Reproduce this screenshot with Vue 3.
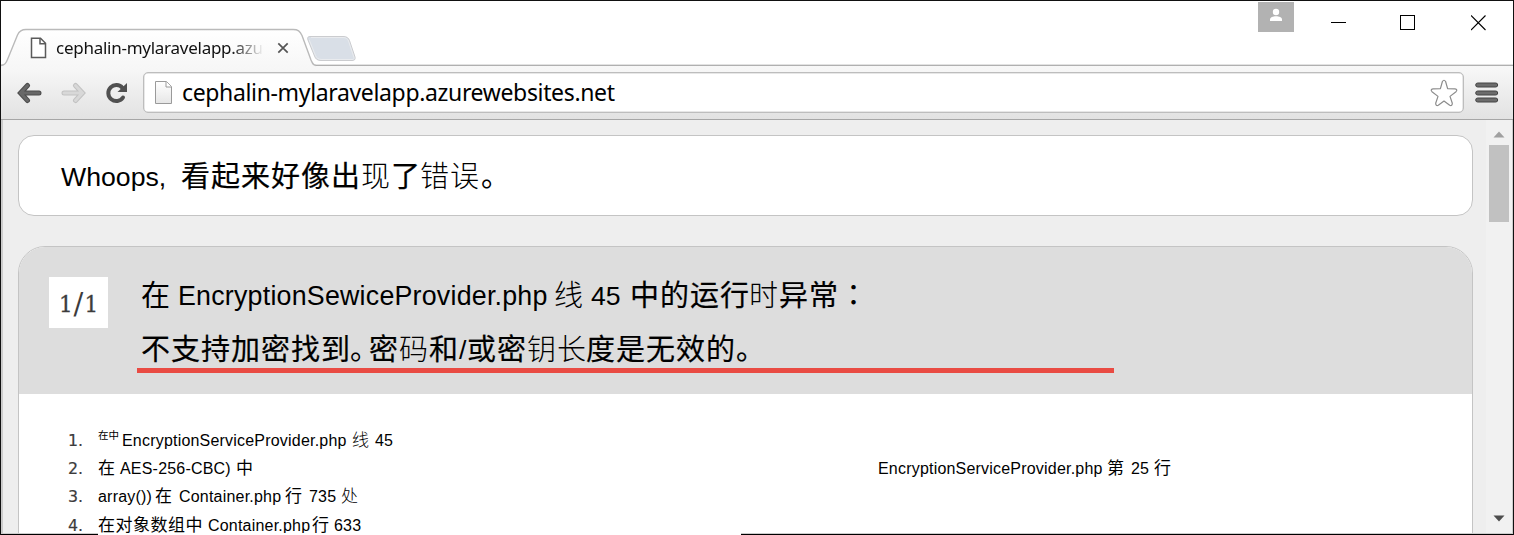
<script setup>
// Every run carries its text, its advance width in px and a style name.
const notice = [
  { t: 'Whoops,', w: 120, k: 'latin' },
  { t: '看起来好像出', w: 180, k: 'heavy' },
  { t: '现', w: 30, k: 'thin' },
  { t: '了', w: 29, k: 'heavy' },
  { t: '错误', w: 60, k: 'thin' },
  { t: '。', w: 31, k: 'heavy stop' },
]
const headline = [
  { t: '在', w: 37, k: 'heavy light' },
  { t: 'EncryptionSewiceProvider.php', w: 376, k: 'latin wide' },
  { t: '线', w: 37, k: 'thin' },
  { t: '45', w: 39, k: 'latin' },
  { t: '中的运行', w: 119, k: 'heavy' },
  { t: '时', w: 30, k: 'thin' },
  { t: '异常', w: 60, k: 'heavy' },
  { t: '：', w: 31, k: 'heavy tc light' },
]
const detail = [
  { t: '不支持加密找到', w: 211, k: 'heavy' },
  { t: '。', w: 17, k: 'heavy narrow light' },
  { t: '密', w: 30, k: 'heavy' },
  { t: '码', w: 30, k: 'thin' },
  { t: '和', w: 30, k: 'heavy' },
  { t: '/', w: 8, k: 'latin' },
  { t: '或密', w: 60, k: 'heavy' },
  { t: '钥长', w: 59, k: 'thin' },
  { t: '度是无效的。', w: 181, k: 'heavy' },
]
const frames = [
  [
    { t: '在中', w: 24, k: 'tiny' },
    { t: 'EncryptionServiceProvider.php', w: 230, k: 'sl' },
    { t: '线', w: 23, k: 'sc faint' },
    { t: '45', w: 20, k: 'sl' },
  ],
  [
    { t: '在', w: 22, k: 'sc' },
    { t: 'AES-256-CBC)', w: 116, k: 'sl' },
    { t: '中', w: 642, k: 'sc' },
    { t: 'EncryptionServiceProvider.php', w: 229, k: 'sl' },
    { t: '第', w: 24, k: 'sc' },
    { t: '25', w: 23, k: 'sl' },
    { t: '行', w: 20, k: 'sc' },
  ],
  [
    { t: 'array())', w: 57, k: 'sl' },
    { t: '在', w: 24, k: 'sc' },
    { t: 'Container.php', w: 106, k: 'sl' },
    { t: '行', w: 24, k: 'sc' },
    { t: '735', w: 32, k: 'sl' },
    { t: '处', w: 20, k: 'sc faint' },
  ],
  [
    { t: '在对象数组中', w: 110, k: 'sc' },
    { t: 'Container.php', w: 104, k: 'sl' },
    { t: '行', w: 22, k: 'sc' },
    { t: '633', w: 32, k: 'sl' },
  ],
]
</script>

<template>
  <div class="window">
    <header class="titlebar">
      <svg class="tabshape" width="364" height="39" viewBox="0 0 364 39">
        <defs>
          <linearGradient id="tabfill" x1="0" y1="0" x2="0" y2="1">
            <stop offset="0" stop-color="#fff" />
            <stop offset="1" stop-color="#f7f7f7" />
          </linearGradient>
        </defs>
        <path d="M0 37.5C4 37 5 35 6.500 31.500L16.500 7C18.500 2.500 21 1.500 25 1.500H292C297 1.500 299 3 301 7.500L310 32C311.500 35.500 312 37 315 37.500V39H0Z" fill="url(#tabfill)" />
        <path d="M0 37.500C4 37 5 35 6.500 31.500L16.500 7C18.500 2.500 21 1.500 25 1.500H292C297 1.500 299 3 301 7.500L310 32C311.500 35.500 312 37 315 37.500" fill="none" stroke="#bababa" stroke-width="1.4" />
        <path d="M309 8.500H342C346 8.500 347.500 10 348.500 12.500L354 29C354.500 31.500 353.500 32.500 351 32.500H320C316.500 32.500 314.500 31 313.500 28L307 12C306 9.500 307 8.500 309 8.500Z" fill="#d9dfe7" stroke="#cbcccf" />
        <path d="M310 9.500H342C345.500 9.500 346.500 11 347.500 13L353 29.500C353.300 31 352.500 31.500 351 31.500H321C317.500 31.500 315.500 30 314.500 27.500L308.300 12" fill="none" stroke="#e9ebee" />
      </svg>
      <div class="tab">
        <svg width="17" height="22" viewBox="0 0 17 22">
          <path d="M1.500 1.200H10.500L15.500 6.200V20.500H1.500Z" fill="#fff" stroke="#5a5a5a" stroke-width="1.500" />
          <path d="M10 1V6.700H15.500" fill="none" stroke="#5a5a5a" stroke-width="1.500" />
        </svg>
        <span class="tabtitle">cephalin-mylaravelapp.azu</span>
        <svg class="tabclose" width="12" height="12" viewBox="0 0 12 12">
          <path d="M1.300 1.300L10.700 10.700M10.700 1.300L1.300 10.700" stroke="#555" stroke-width="1.700" />
        </svg>
      </div>
      <div class="controls">
        <svg width="36" height="30" viewBox="0 0 36 30">
          <rect width="36" height="30" fill="#b2b2b2" />
          <circle cx="18" cy="10" r="3.200" fill="#fff" />
          <path d="M12 19V17.500C12 15.500 15 14.300 18 14.300S24 15.500 24 17.500V19Z" fill="#fff" />
        </svg>
        <svg width="16" height="30" viewBox="0 0 16 30"><path d="M0 20.500H15" stroke="#000" /></svg>
        <svg width="16" height="30" viewBox="0 0 16 30"><rect x="0.500" y="13.500" width="14" height="14" fill="none" stroke="#000" /></svg>
        <svg width="16" height="30" viewBox="0 0 16 30"><path d="M0 13.500L14.500 28M14.500 13.500L0 28" stroke="#000" stroke-width="1.100" /></svg>
      </div>
    </header>

    <nav class="toolbar">
      <svg width="25" height="22" viewBox="0 0 25 22">
        <path d="M10.500 3.500L3.500 11L10.500 18.500M4 11H22" fill="none" stroke="#4c4c4c" stroke-width="5" stroke-linecap="round" />
        <path d="M10.500 3.500L3.500 11L10.500 18.500M4 11H22" fill="none" stroke="#686868" stroke-width="3" stroke-linecap="round" />
      </svg>
      <svg class="fwd" width="25" height="22" viewBox="0 0 25 22">
        <path d="M14.500 3.500L21.500 11L14.500 18.500M21 11H3" fill="none" stroke="#c2c2c2" stroke-width="5" stroke-linecap="round" />
        <path d="M14.500 3.500L21.500 11L14.500 18.500M21 11H3" fill="none" stroke="#d8d8d8" stroke-width="3" stroke-linecap="round" />
      </svg>
      <svg class="reload" width="23" height="22" viewBox="0 0 23 22">
        <path d="M18 15.500A8 8 0 1 1 17.500 6" fill="none" stroke="#505050" stroke-width="4" stroke-linecap="round" />
        <path d="M22 1V10H12.500Z" fill="#505050" />
      </svg>
      <div class="address">
        <svg width="19" height="25" viewBox="0 0 19 25">
          <defs>
            <linearGradient id="pagefill" x1="0" y1="0" x2="0" y2="1">
              <stop offset="0" stop-color="#fff" />
              <stop offset="1" stop-color="#e6e6e6" />
            </linearGradient>
          </defs>
          <path d="M2.500 1.500H13.500L18.500 6.500V23.500H2.500Z" fill="url(#pagefill)" stroke="#9a9a9a" />
          <path d="M13 1.500V7H18.500" fill="#fff" stroke="#9a9a9a" />
        </svg>
        <span class="url">cephalin-mylaravelapp.azurewebsites.net</span>
        <svg class="star" width="28" height="28" viewBox="0 0 28 28">
          <path d="M12.400 2.500Q14 0 15.600 2.500L17.600 9.600L25 9.900Q28 10.700 26 12.700L20 17.400L22.300 24.300Q22.300 27.300 19.700 26.300L14 22L8.300 26.300Q5.700 27.300 5.700 24.300L8 17.400L2 12.700Q0 10.700 3 9.900L10.400 9.600Z" fill="#fff" stroke="#8c8c8c" stroke-width="1.200" stroke-linejoin="round" />
        </svg>
      </div>
      <svg class="menu" width="24" height="22" viewBox="0 0 24 22">
        <g fill="#6c6c6c" stroke="#444">
          <rect x="0.700" y="1" width="22" height="4" rx="2" />
          <rect x="0.700" y="9" width="22" height="4" rx="2" />
          <rect x="0.700" y="16" width="22" height="4" rx="2" />
        </g>
      </svg>
    </nav>

    <main class="viewport">
      <div class="page">
        <section class="notice">
          <div class="line">
            <span v-for="(r, i) in notice" :key="i" :class="r.k" :style="{ width: r.w + 'px' }">{{ r.t }}</span>
          </div>
        </section>
        <section class="trace">
          <div class="head">
            <div class="count"><span>1</span><span class="slash">/</span><span>1</span></div>
            <div class="message">
              <div class="line">
                <span v-for="(r, i) in headline" :key="i" :class="r.k" :style="{ width: r.w + 'px' }">{{ r.t }}</span>
              </div>
              <div class="line second">
                <span v-for="(r, i) in detail" :key="i" :class="r.k" :style="{ width: r.w + 'px' }">{{ r.t }}</span>
              </div>
              <div class="underline"></div>
            </div>
          </div>
          <div class="frames">
            <div v-for="(f, n) in frames" :key="n" class="frame">
              <span class="num">{{ n + 1 }}.</span>
              <span v-for="(r, i) in f" :key="i" :class="r.k" :style="{ width: r.w + 'px' }">{{ r.t }}</span>
            </div>
          </div>
        </section>
      </div>
      <div class="scrollbar">
        <svg width="12" height="7" viewBox="0 0 12 7"><path d="M0.500 6.500L6 0.500L11.500 6.500Z" fill="#a0a0a0" /></svg>
        <div class="thumb"></div>
        <svg class="down" width="12" height="7" viewBox="0 0 12 7"><path d="M0.500 0.500L6 6.500L11.500 0.500Z" fill="#4d4d4d" /></svg>
      </div>
    </main>
    <footer class="edge"><i class="gap"></i></footer>
  </div>
</template>

<style>
body { margin: 0; overflow: hidden; }
</style>

<style scoped>
* { box-sizing: border-box; }
svg { display: block; flex: none; }
.window {
  width: 1514px;
  height: 535px;
  display: flex;
  flex-direction: column;
  border: 1px solid #111;
  border-bottom: 0;
  background: #fff;
  overflow: hidden;
}
.edge { position: relative; flex: none; height: 1px; background: #000; }
.gap { position: absolute; left: 97px; bottom: 0; width: 643px; height: 2px; background: #fff; }
.titlebar {
  position: relative;
  height: 65px;
  flex: none;
  display: flex;
  justify-content: space-between;
  border-bottom: 1px solid #b0b0b0;
  box-shadow: inset 0 -1px 0 #e2e2e2;
}
.tabshape { position: absolute; left: 0; bottom: -2px; }
.tab {
  position: relative;
  display: flex;
  align-items: center;
  width: 300px;
  height: 34px;
  margin-top: 30px;
  padding-left: 29px;
}
.tabtitle {
  width: 210px;
  margin-left: 9px;
  white-space: nowrap;
  font: 17px/26px "Noto Sans", sans-serif;
  letter-spacing: -0.260px;
  color: #111;
  -webkit-mask-image: linear-gradient(to right, #000 175px, transparent 208px);
  mask-image: linear-gradient(to right, #000 175px, transparent 208px);
}
.tabclose { margin-left: 11px; }
.controls { display: flex; padding: 1px 26px 0 0; }
.controls svg + svg { margin-left: 37px; }
.controls svg + svg + svg { margin-left: 53px; }
.controls svg + svg + svg + svg { margin-left: 55px; }
.toolbar {
  height: 54px;
  flex: none;
  display: flex;
  align-items: center;
  padding-left: 16px;
  background: linear-gradient(#f8f8f8, #e2e2e2);
  border-bottom: 1px solid #a6a6a6;
}
.fwd { margin-left: 19px; }
.reload { margin-left: 19px; }
.address {
  width: 1321px;
  height: 41px;
  margin-left: 15px;
  padding: 0 5px 0 9px;
  display: flex;
  align-items: center;
  background: #fff;
  border: 1px solid #bdbdbd;
  box-shadow: inset 0 0 0 0.500px #d0d0d0;
  border-radius: 5px;
}
.url { margin-left: 10px; font: 23px/36px "Noto Sans", sans-serif; letter-spacing: -0.350px; color: #000; white-space: nowrap; position: relative; top: -1px; }
.star { margin-left: auto; }
.menu { margin-left: 11px; }
.viewport {
  flex: 1;
  min-height: 0;
  display: flex;
  background: #eee;
  border: solid #ccc;
  border-width: 0 1px 1px 2px;
}
.page { width: 1483px; padding: 15px 0 0 15px; overflow: hidden; }
.notice {
  width: 1455px;
  height: 81px;
  padding: 18px 0 0 42px;
  background: #fff;
  border: 1px solid #c4c4c4;
  border-radius: 16px;
}
.line { display: flex; align-items: baseline; height: 40px; line-height: 40px; white-space: nowrap; color: #000; }
.line span { flex: none; }
.line .latin { font-family: "Liberation Sans", Arial, sans-serif; font-size: 26.670px; position: relative; top: -1px; }
.line .wide { font-size: 26.800px; letter-spacing: 0.220px; }
.heavy { font-family: "Noto Sans CJK SC", sans-serif; font-size: 29px; letter-spacing: 1px; font-weight: 400; -webkit-text-stroke: 0.200px #000; }
.light { -webkit-text-stroke: 0; }
.thin { font-family: "Noto Sans CJK SC", sans-serif; font-size: 29px; letter-spacing: 1px; font-weight: 300; }
.tc { font-family: "Noto Sans CJK TC", sans-serif; }
.stop { text-indent: 1px; -webkit-text-stroke: 0; }
.narrow { text-indent: -2px; letter-spacing: -10px; }
.trace {
  width: 1455px;
  height: 320px;
  margin-top: 30px;
  background: #fff;
  border: 1px solid #c4c4c4;
  border-radius: 27px 27px 0 0;
  overflow: hidden;
}
.head { display: flex; height: 147px; background: #ddd; padding-left: 30px; }
.count {
  display: flex;
  justify-content: center;
  align-items: baseline;
  width: 59px;
  height: 51px;
  margin-top: 30px;
  background: #fff;
  font: 21.500px/56px "DejaVu Serif", serif;
  color: #3c3c3c;
  -webkit-text-stroke: 0.300px #3c3c3c;
}
.slash { font-size: 29px; line-height: 1; margin: 0 1px; -webkit-text-stroke: 0; position: relative; top: 2px; }
.message { margin: 26px 0 0 33px; }
.second { margin-top: 14px; }
.underline { width: 977px; height: 5px; margin: 1px 0 0 -4.500px; background: #e94b43; }
.frames { padding: 31px 0 0 49px; }
.frame { display: flex; align-items: baseline; height: 28.200px; line-height: 28px; white-space: nowrap; color: #000; }
.frame span { flex: none; }
.frame .num { width: 30px; font-family: "DejaVu Sans", sans-serif; font-size: 15.800px; color: #3c3c3c; -webkit-text-stroke: 0.200px #3c3c3c; }
.sl { font-family: "Liberation Sans", Arial, sans-serif; font-size: 16px; letter-spacing: 0.200px; }
.sc { font-family: "Noto Sans CJK SC", sans-serif; font-size: 17px; letter-spacing: 0.500px; font-weight: 400; }
.faint { font-weight: 300; }
.tiny { font-family: "Noto Sans CJK SC", sans-serif; font-size: 10.500px; position: relative; top: -7px; }
.scrollbar { flex: 1; display: flex; flex-direction: column; align-items: center; padding: 11px 0 11px; background: #f1f1f1; }
.thumb { width: 20px; height: 77px; margin-top: 7px; background: #c1c1c1; }
.down { margin-top: auto; }
</style>
